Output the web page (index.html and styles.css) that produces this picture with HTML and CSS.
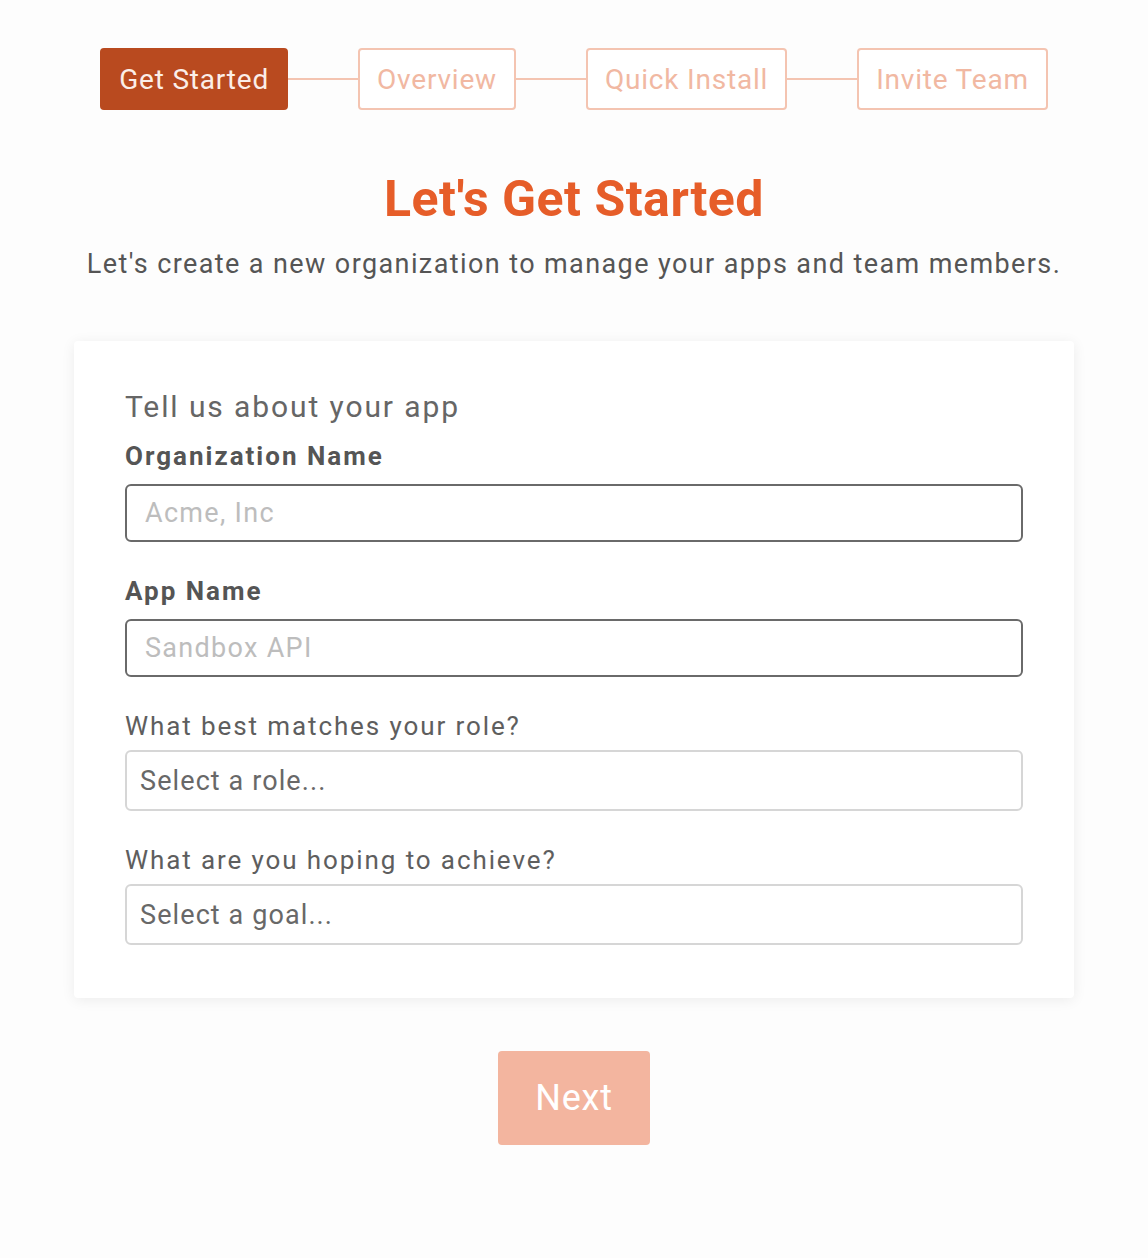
FILE: index.html
```html
<!DOCTYPE html>
<html lang="en">
<head>
<meta charset="utf-8">
<title>Get Started</title>
<link rel="stylesheet" href="styles.css">
</head>
<body>
<main class="page">
  <nav class="stepper">
    <div class="step step-active">Get Started</div>
    <span class="connector"></span>
    <div class="step">Overview</div>
    <span class="connector"></span>
    <div class="step">Quick Install</div>
    <span class="connector"></span>
    <div class="step">Invite Team</div>
  </nav>

  <h1 class="title">Let's Get Started</h1>
  <p class="subtitle">Let's create a new organization to manage your apps and team members.</p>

  <section class="card">
    <h2 class="card-heading">Tell us about your app</h2>

    <label class="label label-bold" for="org">Organization Name</label>
    <input class="field field-dark" id="org" type="text" placeholder="Acme, Inc">

    <label class="label label-bold label-spaced" for="app">App Name</label>
    <input class="field field-dark" id="app" type="text" placeholder="Sandbox API">

    <label class="label label-spaced" for="role">What best matches your role?</label>
    <select class="field field-select" id="role">
      <option>Select a role...</option>
    </select>

    <label class="label label-spaced" for="goal">What are you hoping to achieve?</label>
    <select class="field field-select" id="goal">
      <option>Select a goal...</option>
    </select>
  </section>

  <div class="actions">
    <button class="next-btn" type="button">Next</button>
  </div>
</main>
</body>
</html>
```

FILE: styles.css
```css
* { box-sizing: border-box; }

html, body {
  margin: 0;
  padding: 0;
  background: #fdfdfd;
}

body {
  font-family: Roboto, "Noto Sans", "Liberation Sans", sans-serif;
  color: #555;
}

.page {
  width: 1148px;
  display: flex;
  flex-direction: column;
  align-items: center;
  padding-top: 48px;
}

.stepper {
  display: flex;
  align-items: center;
}

.step {
  height: 62px;
  padding: 0 17px;
  display: flex;
  align-items: center;
  border: 2px solid #f4c4b1;
  border-radius: 4px;
  background: #fff;
  color: #f1b8a2;
  font-size: 28px;
  letter-spacing: 0.8px;
  white-space: nowrap;
}

.step-active {
  background: #b94a1f;
  border-color: #b94a1f;
  color: #fbeee8;
}

.connector {
  width: 70px;
  height: 2px;
  background: #f4c4b1;
}

.title {
  margin: 60px 0 0;
  font-size: 50px;
  line-height: 58px;
  font-weight: 700;
  letter-spacing: 0.5px;
  color: #e65d29;
}

.subtitle {
  margin: 20px 0 0;
  font-size: 27px;
  line-height: 32px;
  letter-spacing: 1.4px;
  color: #555;
}

.card {
  margin-top: 61px;
  width: 1000px;
  background: #fff;
  border-radius: 4px;
  box-shadow: 0 2px 14px rgba(0, 0, 0, 0.07);
  padding: 47px 51px 53px;
  display: flex;
  flex-direction: column;
}

.card-heading {
  margin: 0;
  font-size: 30px;
  line-height: 38px;
  font-weight: 400;
  letter-spacing: 1.9px;
  color: #666;
}

.label {
  display: block;
  font-size: 26px;
  line-height: 30px;
  letter-spacing: 1.9px;
  color: #5e5e5e;
  margin: 15px 0 9px;
}

.label-bold {
  font-weight: 700;
  letter-spacing: 2px;
  color: #555;
  margin-bottom: 13px;
}

.label-spaced {
  margin-top: 34px;
}

.field {
  display: block;
  width: 100%;
  font-family: inherit;
  font-size: 27px;
  background: #fff;
  outline: none;
  margin: 0;
}

.field-dark {
  height: 58px;
  border: 2px solid #6a6a6a;
  border-radius: 6px;
  padding: 0 18px;
  letter-spacing: 1.3px;
  color: #444;
}

.field-dark::placeholder {
  color: #bdbdbd;
}

.field-select {
  height: 61px;
  border: 2px solid #d6d6d6;
  border-radius: 6px;
  padding: 0 13px;
  letter-spacing: 1.1px;
  color: #686868;
  -webkit-appearance: none;
  appearance: none;
}

.actions {
  margin-top: 53px;
  display: flex;
  justify-content: center;
}

.next-btn {
  width: 152px;
  height: 94px;
  border: none;
  border-radius: 4px;
  background: #f3b59f;
  color: #fff;
  font-family: inherit;
  font-size: 36px;
  letter-spacing: 0.8px;
  cursor: pointer;
}
```
